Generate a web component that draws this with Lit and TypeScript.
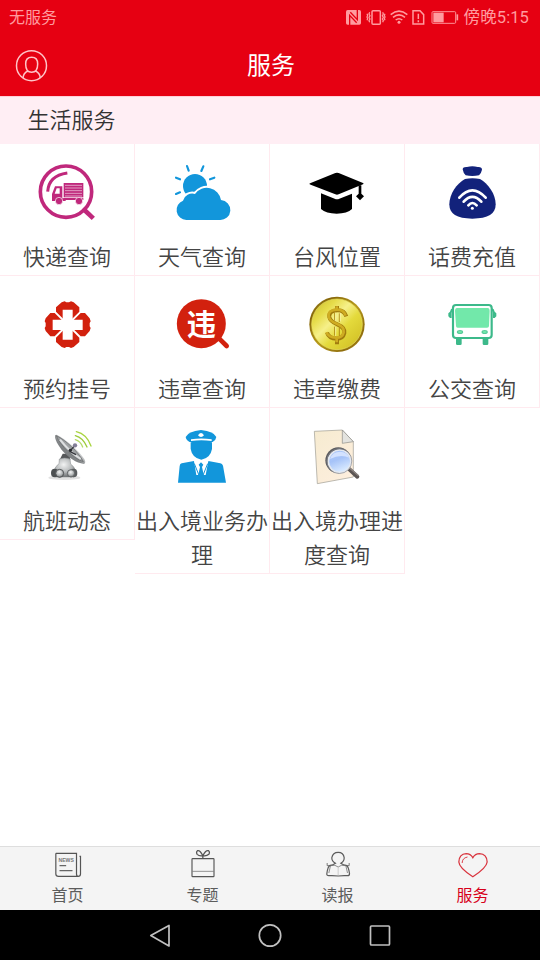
import { LitElement, html, css, svg, TemplateResult } from "lit";
import { customElement } from "lit/decorators.js";
import { classMap } from "lit/directives/class-map.js";

interface Service {
  label: string;
  viewBox: string;
  art: TemplateResult;
}

const LEFT = "111 54 180 180";
const RIGHT = "516 54 180 180";

const express = svg`
  <g fill="none" stroke="#c0287c">
    <circle cx="198" cy="143" r="77" stroke-width="11"/>
    <path d="M143 143Q146 95 202 87" stroke-width="9"/>
    <path d="M250 195L280 223" stroke-width="14"/>
    <path d="M250 192L262 206" stroke-width="7"/>
  </g>
  <g fill="#c0287c">
    <path d="M191 117h59v43h-59z"/>
    <path fill-rule="evenodd" d="M165 127h22v36h10v8h-41v-21zM170 133l-6 16h15v-16z"/>
    <path d="M190 162h60v6h-60z"/>
    <g stroke="#fff" stroke-width="2"><circle cx="177" cy="171" r="11"/><circle cx="237" cy="171" r="11"/></g>
  </g>
  <path d="M195 124h51M195 132h51M195 140h51M195 148h51M195 156h51" stroke="#fff" stroke-opacity=".75" stroke-width="2.2"/>`;

const weather = svg`
  <circle cx="585" cy="126" r="36" fill="#1296db"/>
  <path d="M561 66l5 14M610 67l-6 14M528 101l12 5M643 101l-13 5M528 150l12-5" stroke="#1296db" stroke-width="6.5" stroke-linecap="round"/>
  <path d="M559 228h100a30 30 0 0 0 4-60a43 43 0 0 0-78-18a29 29 0 0 0-36 20a30 30 0 0 0 10 58z" fill="#1296db" stroke="#fff" stroke-width="12" paint-order="stroke"/>`;

const mortarboard = svg`
  <path d="M118 120Q118 118 122 117L196 87Q201 85 206 87L279 117Q283 119 279 121L206 151Q201 153 196 151L122 122Z"/>
  <path d="M153 148L194 164Q201 167 208 164L246 149V195Q232 209 200 209Q168 209 153 195Z"/>
  <path d="M266 124h8v25l8 8-12 12-12-12 8-8z"/>`;

const moneyBag = svg`
  <g fill="#12227b">
    <path d="M578 76Q579 68 591 69Q607 64 623 69Q636 68 636 77Q634 87 627 94Q607 98 587 94Q580 88 578 76Z"/>
    <path d="M585 105Q607 101 630 105C655 120 677 150 677 181C677 210 655 224 607 224C560 224 538 210 538 181C538 150 560 119 585 105Z"/>
  </g>
  <g fill="none" stroke="#fff" stroke-width="8" stroke-linecap="round">
    <path d="M568 161Q607 117 647 161"/><path d="M581 173Q607 144 634 173"/><path d="M595 184Q607 170 620 184"/>
  </g>
  <circle cx="607" cy="193" r="4.5" fill="#fff"/>`;

const hospital = svg`
  <g fill="#d2210e">
    <path d="M203 142L168 107V94L185 79L194 76L199 79H207L213 76L221 79L238 94V107Z"/>
    <path d="M203 150L168 185V198L185 213L194 216L199 213H207L213 216L221 213L238 198V185Z"/>
    <path d="M199 146L164 111H151L137 127L134 136L137 141V151L134 156L137 165L151 181H164Z"/>
    <path d="M207 146L242 111H255L269 127L272 136L269 141V151L272 156L269 165L255 181H242Z"/>
  </g>
  <path d="M188 101h30v30h30v31h-30v29h-30v-29h-30v-31h30z" fill="#fff"/>`;

const violation = svg`
  <circle cx="604" cy="143" r="73.5" fill="#d2210e"/>
  <path d="M654 184L680 210" stroke="#d2210e" stroke-width="14" stroke-linecap="round"/>
  <text x="604" y="177" text-anchor="middle" class="badge-char">违</text>`;

const coin = svg`
  <defs>
    <linearGradient id="rim" x1="0" y1="0" x2="1" y2="1">
      <stop offset="0" stop-color="#b5a52a"/><stop offset=".2" stop-color="#85650a"/><stop offset=".5" stop-color="#b79a1a"/><stop offset=".8" stop-color="#8f6d0d"/><stop offset="1" stop-color="#c3a21f"/>
    </linearGradient>
    <linearGradient id="face" x1="0" y1="0" x2="1" y2="1">
      <stop offset="0" stop-color="#c8b82b"/><stop offset=".25" stop-color="#e6dc4a"/><stop offset=".42" stop-color="#f6f08a"/><stop offset=".6" stop-color="#e4da3c"/><stop offset="1" stop-color="#cdb91f"/>
    </linearGradient>
  </defs>
  <circle cx="201" cy="145" r="83" fill="url(#rim)"/>
  <circle cx="201" cy="145" r="76" fill="url(#face)" stroke="#e9df62" stroke-width="2"/>
  <g fill="none" stroke-linejoin="round">
    <path d="M229 121Q222 102 202 103Q176 104 178 123Q180 136 202 145Q226 155 223 171Q219 188 200 188Q177 188 171 170M201 90v14M201 188v17" stroke="#a17b0e" stroke-width="12"/>
    <path d="M227 119Q221 100 200 101Q174 102 176 121Q178 135 200 143Q224 152 221 169Q217 185 198 185Q176 185 169 169M200 91v12M200 187v12" stroke="#cfac22" stroke-width="8"/>
    <path d="M194 110v24M208 112v26M194 152v27M208 156v24" stroke="#b08b15" stroke-width="3"/>
    <path d="M197 110v24M211 112v24M197 153v27" stroke="#f8f3a4" stroke-width="2.5"/>
  </g>`;

const bus = svg`
  <g fill="#3cb98a">
    <path d="M558 188h17v15q0 4-4 4h-9q-4 0-4-4zM638 188h17v15q0 4-4 4h-9q-4 0-4-4z"/>
    <path d="M549 96Q541 98 540 107L535 112V121L540 126H545V111Q545 105 549 104ZM665 96Q673 98 674 107L679 112V121L674 126H669V111Q669 105 665 104Z"/>
  </g>
  <rect x="549" y="87" width="116" height="99" rx="9" fill="#fff" stroke="#3cb98a" stroke-width="6.5"/>
  <path d="M560 96h94q5 0 5 8l-2 46q0 5-6 5h-88q-5 0-5-5l-3-46q0-8 5-8z" fill="#72e8aa"/>
  <ellipse cx="570" cy="168" rx="9.5" ry="6" fill="#58c99a"/><ellipse cx="644" cy="168" rx="9.5" ry="6" fill="#58c99a"/>
  <ellipse cx="570" cy="168" rx="6" ry="2.8" fill="#72e8aa"/><ellipse cx="644" cy="168" rx="6" ry="2.8" fill="#72e8aa"/>`;

const radar = svg`
  <defs>
    <linearGradient id="dish" x1="0" y1="1" x2="1" y2="0">
      <stop offset="0" stop-color="#55585a"/><stop offset=".45" stop-color="#85888a"/><stop offset=".6" stop-color="#d5d7d8"/><stop offset="1" stop-color="#77797b"/>
    </linearGradient>
    <radialGradient id="steel" cx=".45" cy=".35" r=".7">
      <stop offset="0" stop-color="#f2f3f3"/><stop offset=".55" stop-color="#b5b8b9"/><stop offset="1" stop-color="#5e6163"/>
    </radialGradient>
  </defs>
  <ellipse cx="193" cy="209" rx="48" ry="7" fill="#e2e2e2"/>
  <path d="M188 137h20l3 18h-32z" fill="#555759"/>
  <path d="M178 153Q194 147 210 153L212 168Q224 176 228 192L222 207H166L161 190Q166 174 177 167Z" fill="url(#steel)" stroke="#85888a" stroke-width="1.5"/>
  <ellipse cx="164" cy="195" rx="11" ry="13" fill="#4d5052"/><ellipse cx="221" cy="195" rx="11" ry="13" fill="#5a5d5f"/>
  <circle cx="179" cy="196" r="12" fill="url(#steel)" stroke="#55585a" stroke-width="3"/>
  <circle cx="213" cy="196" r="11" fill="url(#steel)" stroke="#66696b" stroke-width="3"/>
  <path d="M165 82C162 103 204 162 252 168Q259 164 253 153C236 126 198 94 170 80Z" fill="url(#dish)"/>
  <path d="M169 83C180 112 224 154 250 161C235 131 198 97 169 83Z" fill="#9fa2a4" stroke="#606365" stroke-width="2"/>
  <path d="M180 95C200 120 226 143 242 153" stroke="#dfe1e2" stroke-width="6" fill="none"/>
  <path d="M209 130L224 113M209 130L228 140" stroke="#34363b" stroke-width="4"/>
  <circle cx="211" cy="127" r="5" fill="#292b2e"/><circle cx="225" cy="112" r="6.5" fill="#827e96"/>
  <g fill="none" stroke-linecap="round" stroke-width="4">
    <path d="M229 71Q260 78 273 114" stroke="#a9d43f"/><path d="M226 83Q249 89 261 117" stroke="#9ccb3a"/><path d="M226 95Q241 99 248 117" stroke="#b5d96c"/>
  </g>`;

const officer = svg`
  <g fill="#1296db">
    <path d="M557 87Q564 70 603 66Q642 70 649 87Q648 96 638 102H569Q558 96 557 87Z"/>
    <path d="M572 103Q604 96 636 103V123Q631 151 604 155Q577 151 572 123Z"/>
    <path d="M545 166L582 159L603 203L625 159L661 166Q667 167 669 173L678 224H534L539 174Q540 167 545 166Z"/>
  </g>
  <path d="M573 94Q604 89 635 94V99Q604 95 573 99Z" fill="#fff"/>
  <path d="M594 82q5-7 9-7t9 7q-4 5-9 5t-9-5z" fill="#fff"/>
  <path d="M582 159L603 165L625 159L617 201H589Z" fill="#fff"/>
  <path d="M603 163l7 7-4 7 5 23-8 8-8-8 5-23-4-7z" fill="#1296db"/>
  <path d="M583 167L599 207M623 167L607 207" stroke="#1296db" stroke-width="3"/>`;

const documentSearch = svg`
  <defs>
    <linearGradient id="paper" x1="0" y1="0" x2=".7" y2="1">
      <stop offset="0" stop-color="#f6ebd0"/><stop offset="1" stop-color="#fdeedd"/>
    </linearGradient>
    <linearGradient id="lens" x1="0" y1="0" x2=".4" y2="1">
      <stop offset="0" stop-color="#a9c5fa"/><stop offset=".5" stop-color="#a6c3f8"/><stop offset="1" stop-color="#d8e9ff"/>
    </linearGradient>
  </defs>
  <path d="M133 70L217 66L250 101V207L142 227Z" fill="url(#paper)" stroke="#9c9a91" stroke-width="2"/>
  <path d="M217 66L250 101L217 106Z" fill="#e3e3df" stroke="#8b8b86" stroke-width="2"/>
  <path d="M234 180L262 206" stroke="#5b5553" stroke-width="12" stroke-linecap="round"/>
  <path d="M236 178L264 202" stroke="#8b8480" stroke-width="4" stroke-linecap="round"/>
  <circle cx="205" cy="157" r="39" fill="#5b5b5f"/>
  <circle cx="209" cy="160" r="34" fill="url(#lens)" stroke="#e4e8ef" stroke-width="5"/>
  <path d="M180 153Q187 131 211 131Q231 132 238 149Q211 138 180 153Z" fill="#d3e2ff"/>
  <circle cx="208" cy="159" r="37.500" fill="none" stroke="#85888f" stroke-width="2"/>`;

const services: Service[] = [
  { label: "快递查询", viewBox: LEFT, art: express },
  { label: "天气查询", viewBox: RIGHT, art: weather },
  { label: "台风位置", viewBox: LEFT, art: mortarboard },
  { label: "话费充值", viewBox: RIGHT, art: moneyBag },
  { label: "预约挂号", viewBox: LEFT, art: hospital },
  { label: "违章查询", viewBox: RIGHT, art: violation },
  { label: "违章缴费", viewBox: LEFT, art: coin },
  { label: "公交查询", viewBox: RIGHT, art: bus },
  { label: "航班动态", viewBox: LEFT, art: radar },
  { label: "出入境业务办理", viewBox: RIGHT, art: officer },
  { label: "出入境办理进度查询", viewBox: LEFT, art: documentSearch },
];

const tabs = [
  {
    label: "首页",
    viewBox: "154.5 27 96 96",
    art: svg`<path d="M166 40h62v62q0 7 5 7M166 40v62q0 7 8 7h59q7 0 7-7V49h-3" fill="none" stroke="#555" stroke-width="3.6"/>
      <path d="M177 77h20M177 92h39" stroke="#666" stroke-width="3.4"/>
      <text x="197" y="67" text-anchor="middle" class="news" textLength="46" lengthAdjust="spacingAndGlyphs">NEWS</text>`,
  },
  {
    label: "专题",
    viewBox: "559.5 27 96 96",
    art: svg`<rect x="574.500" y="56" width="66" height="54" rx="2" fill="none" stroke="#555" stroke-width="3.4"/>
      <path d="M575 94h65" stroke="#777" stroke-width="2.4"/>
      <path d="M607 47Q598 29 591 32Q586 36 590 43Q596 49 607 47Q618 49 625 43Q629 36 624 32Q616 29 607 47M607 46v9" fill="none" stroke="#555" stroke-width="3.8"/>`,
  },
  {
    label: "读报",
    viewBox: "154.5 27 96 96",
    art: svg`<g fill="none" stroke="#5c5c5c" stroke-width="3.6">
      <path d="M195 70Q183 63 184 53Q187 37 203 37Q219 37 221 53Q222 63 211 70Q219 76 227 76Q234 78 237 101Q237 107 231 107Q216 106 203 108Q189 106 175 107Q168 107 169 101Q172 78 179 76Q187 76 195 70Z"/>
      <path d="M175 99L180 77Q195 73 203 81Q211 73 226 77L231 99" stroke-width="2"/>
      <path d="M203 82v24" stroke="#aaa" stroke-width="1.6"/>
      <path d="M170 69v8h9M236 69v8h-9" stroke-width="2.4"/></g>`,
  },
  {
    label: "服务",
    viewBox: "559.5 27 96 96",
    active: true,
    art: svg`<path d="M607 53Q600 41 587 41Q566 42 565 66Q566 84 607 110Q648 84 650 66Q649 42 627 41Q614 41 607 53Z" fill="none" stroke="#d9343e" stroke-width="3.8"/>
      <path d="M575 69Q575 54 591 51" fill="none" stroke="#d9343e" stroke-width="2.8"/>`,
  },
];

@customElement("app-root")
export class AppRoot extends LitElement {
  static styles = css`
    :host {
      display: flex;
      flex-direction: column;
      height: 960px;
      width: 540px;
      overflow: hidden;
      background: #fff;
      font-family: "Noto Sans CJK SC", "Noto Sans", sans-serif;
      font-weight: 350;
      color: #444;
    }
    svg { display: block; flex: none; }
    .status {
      display: flex;
      align-items: center;
      justify-content: space-between;
      height: 34px;
      padding: 0 11px 0 9px;
      box-sizing: border-box;
      background: #e60012;
      color: #ff9b9f;
      font-size: 16px;
      font-weight: 400;
      line-height: 32px;
    }
    .carrier { padding-bottom: 2px; }
    .indicators { display: flex; align-items: center; gap: 3px; }
    .clock { font-family: Roboto, "Noto Sans CJK SC", sans-serif; font-size: 16.5px; letter-spacing: .1px; padding-top: 1px; }
    .header {
      display: grid;
      grid-template-columns: 64px 1fr 64px;
      align-items: center;
      height: 62px;
      background: #e60012;
      color: #fff;
    }
    .avatar { margin-left: 15px; }
    .title { text-align: center; font-size: 24px; font-weight: 400; line-height: 60px; padding: 0 0 2px 2px; }
    .section {
      height: 48px;
      box-sizing: border-box;
      border-top: 1px solid #ffd0d8;
      padding-left: 27.5px;
      background: #ffeef4;
      color: #333;
      font-size: 22px;
      line-height: 42px;
    }
    .grid {
      display: grid;
      grid-template-columns: repeat(4, 135px);
      align-items: start;
    }
    .cell {
      display: flex;
      flex-direction: column;
      align-items: center;
      gap: 16px;
      padding-top: 18px;
      padding-bottom: 3px;
      border-right: 1px solid #ffeaef;
      border-bottom: 1px solid #ffeaef;
    }
    .label { font-size: 22px; line-height: 34px; text-align: center; }
    .space { flex: 1; }
    .badge-char { font-size: 88px; font-weight: 700; fill: #fff; }
    .news { font: 700 15px "Liberation Sans", sans-serif; fill: #777; }
    .tabs {
      display: grid;
      grid-template-columns: repeat(4, 1fr);
      height: 64px;
      box-sizing: border-box;
      border-top: 1px solid #dedede;
      background: #f4f4f4;
    }
    .tab {
      display: flex;
      flex-direction: column;
      align-items: center;
      padding-top: 2px;
      font-size: 16px;
      line-height: 27px;
      font-weight: 400;
      color: #5c5c5c;
    }
    .active { color: #d7001b; }
    .system {
      display: flex;
      justify-content: center;
      align-items: center;
      gap: 80px;
      height: 50px;
      background: #000;
    }
  `;

  render() {
    return html`
      <div class="status">
        <span class="carrier">无服务</span>
        <div class="indicators">
          <svg width="116" height="18" viewBox="44 22 348 54" fill="none" stroke="#ff9b9f" stroke-width="3.8">
            <rect x="47" y="28" width="45" height="44" rx="5" fill="#ff9b9f" stroke="none"/>
            <path d="M58 73V44L79 66M81 27V57L60 35" stroke="#e60012" stroke-width="4"/>
            <rect x="125" y="30" width="25" height="41" rx="3" stroke-width="4.500"/>
            <path d="M118 35l-2 5 3 5-3 5 3 5-3 5 2 5M110 39l2 5-2 5 2 5-2 5M157 35l2 5-3 5 3 5-3 5 3 5-2 5M164 39l-2 5 2 5-2 5 2 5"/>
            <path d="M181 42Q206 21 231 42M188 50Q206 35 224 50M196 58Q206 50 216 58" stroke-width="4.600"/>
            <circle cx="206" cy="65" r="4.500" fill="#ff9b9f" stroke="none"/>
            <path d="M248 70V30h21l11 12v28zM264 39v16M264 59v6" stroke-width="4.500"/>
            <rect x="305" y="33" width="71" height="35" rx="3" stroke-width="2.800"/>
            <path d="M309 36h31v29h-31z" fill="#ff9b9f" stroke="none"/>
            <path d="M381 41v18" stroke-width="5"/>
          </svg>
          <span class="clock">傍晚5:15</span>
        </div>
      </div>
      <div class="header">
        <svg class="avatar" width="33" height="33" viewBox="45 144 99 99" fill="none" stroke="#ffc4c8" stroke-width="4.500">
          <circle cx="94.5" cy="194" r="45"/>
          <path d="M95 169Q113 169 113 189Q113 214 95 214Q77 214 77 189Q77 169 95 169ZM84 210Q70 216 69 231M106 210Q120 216 121 231"/>
        </svg>
        <div class="title">服务</div>
      </div>
      <div class="section">生活服务</div>
      <div class="grid">
        ${services.map(
          (s) => html`<div class="cell">
            <svg width="60" height="60" viewBox=${s.viewBox}>${s.art}</svg>
            <div class="label">${s.label}</div>
          </div>`
        )}
      </div>
      <div class="space"></div>
      <div class="tabs">
        ${tabs.map(
          (t) => html`<div class=${classMap({ tab: true, active: !!t.active })}>
            <svg width="32" height="32" viewBox=${t.viewBox}>${t.art}</svg>
            <span>${t.label}</span>
          </div>`
        )}
      </div>
      <div class="system">
        <svg width="30" height="30" viewBox="0 0 30 30" fill="none" stroke="#c0c0c0" stroke-width="1.700"><path d="M24 5.500v20.500L5.800 15.600z" stroke-linejoin="round"/></svg>
        <svg width="30" height="30" viewBox="0 0 30 30" fill="none" stroke="#c0c0c0" stroke-width="1.700"><circle cx="15" cy="15.500" r="10.700"/></svg>
        <svg width="30" height="30" viewBox="0 0 30 30" fill="none" stroke="#c0c0c0" stroke-width="1.700"><rect x="5.500" y="6" width="19" height="19" rx="1"/></svg>
      </div>
    `;
  }
}
